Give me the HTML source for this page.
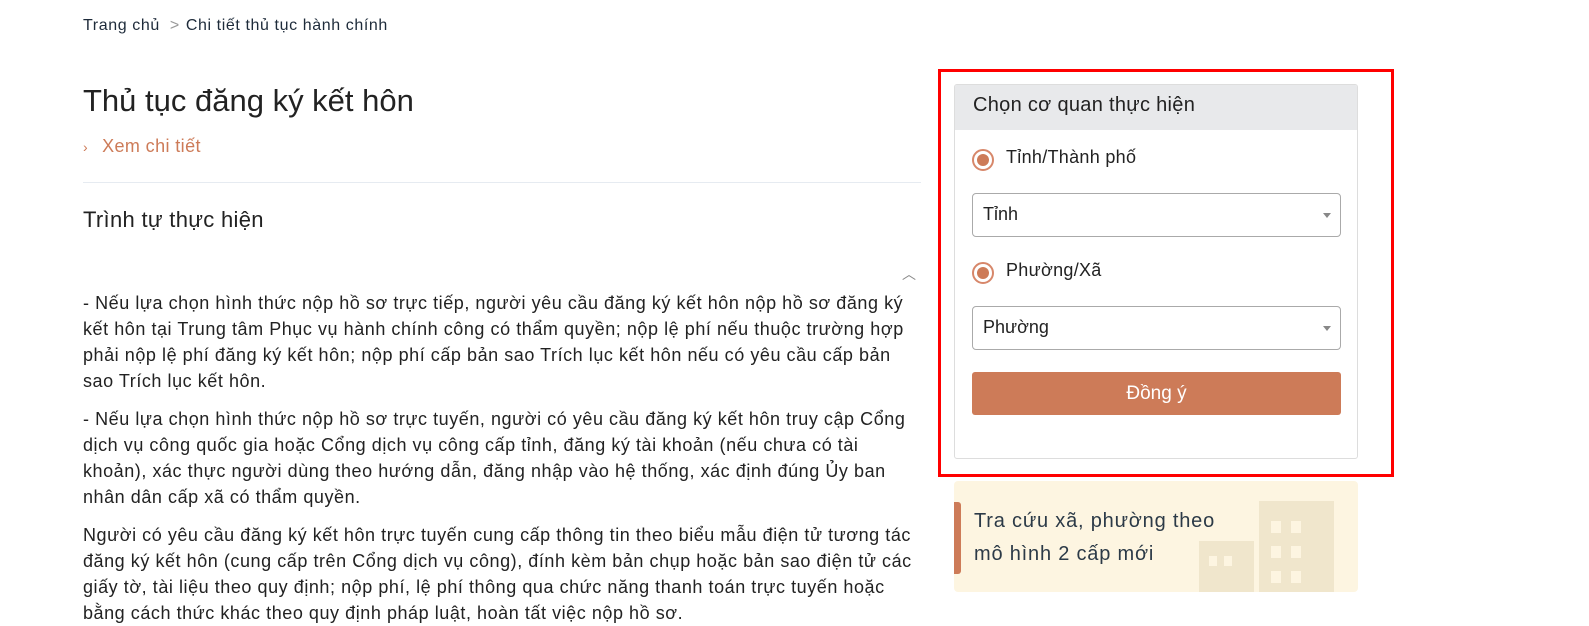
<!DOCTYPE html>
<html><head><meta charset="utf-8"><style>
*{margin:0;padding:0;box-sizing:border-box}
body{width:1589px;height:626px;overflow:hidden;background:#fff;font-family:"Liberation Sans",sans-serif;color:#222;position:relative}
.a{position:absolute;white-space:nowrap}
.bc{left:83px;top:17px;font-size:16px;color:#1e2b3a;letter-spacing:0.6px}
.bc span{color:#999;margin:0 6px 0 10px}
h1{position:absolute;left:83px;top:83px;font-size:31px;font-weight:normal;color:#222;white-space:nowrap}
.x{left:83px;top:136px;font-size:18px;color:#cd7b58;letter-spacing:0.4px}
.hr{position:absolute;left:83px;top:182px;width:838px;height:1px;background:#e6ebf1}
.h2{left:83px;top:207px;font-size:22px;color:#222;letter-spacing:0.3px}
.car{left:902px;top:264px;font-size:14px;color:#888}
.p{left:83px;font-size:18px;color:#222;line-height:26px;letter-spacing:0.55px}
.red{position:absolute;left:938px;top:69px;width:456px;height:408px;border:3px solid #f00}
.card{position:absolute;left:954px;top:84px;width:404px;height:375px;border:1px solid #ddd;border-radius:3px;overflow:hidden}
.hd{height:45px;background:#e8e9eb;font-size:20px;padding:9px 0 0 18px;color:#222;letter-spacing:0.3px}
.rad{position:absolute;width:22px;height:22px;border:2px solid #d7876a;border-radius:50%}
.rad:after{content:"";position:absolute;left:3px;top:3px;width:12px;height:12px;border-radius:50%;background:#cd7b58}
.lb{font-size:18px;color:#222;letter-spacing:0.3px}
.sel{position:absolute;left:17px;width:369px;height:44px;border:1px solid #aaa;border-radius:4px;font-size:18px;padding:10px 0 0 10px;color:#222}
.sel:after{content:"";position:absolute;right:9px;top:19px;border:4px solid transparent;border-top:5px solid #888}
.btn{position:absolute;left:17px;top:287px;width:369px;height:43px;background:#cd7b58;border-radius:3px;color:#fff;font-size:19px;text-align:center;line-height:43px}
.ban{position:absolute;left:954px;top:481px;width:404px;height:111px;background:#fdf5e1;border-radius:4px;overflow:hidden}
.bar{position:absolute;left:0;top:21px;width:7px;height:72px;background:#cd7b58;border-radius:0 3px 3px 0}
.bt{position:absolute;left:20px;top:24px;font-size:20px;line-height:33px;color:#2c3a47;letter-spacing:0.8px}
</style></head><body>
<div class="a bc">Trang chủ<span>&gt;</span>Chi tiết thủ tục hành chính</div>
<h1>Thủ tục đăng ký kết hôn</h1>
<div class="a x"><span style="font-size:14px;margin-right:14px">›</span>Xem chi tiết</div>
<div class="hr"></div>
<div class="a h2">Trình tự thực hiện</div>
<div class="a car">︿</div>
<div class="a p" style="top:290px">- Nếu lựa chọn hình thức nộp hồ sơ trực tiếp, người yêu cầu đăng ký kết hôn nộp hồ sơ đăng ký<br>kết hôn tại Trung tâm Phục vụ hành chính công có thẩm quyền; nộp lệ phí nếu thuộc trường hợp<br>phải nộp lệ phí đăng ký kết hôn; nộp phí cấp bản sao Trích lục kết hôn nếu có yêu cầu cấp bản<br>sao Trích lục kết hôn.</div>
<div class="a p" style="top:406px">- Nếu lựa chọn hình thức nộp hồ sơ trực tuyến, người có yêu cầu đăng ký kết hôn truy cập Cổng<br>dịch vụ công quốc gia hoặc Cổng dịch vụ công cấp tỉnh, đăng ký tài khoản (nếu chưa có tài<br>khoản), xác thực người dùng theo hướng dẫn, đăng nhập vào hệ thống, xác định đúng Ủy ban<br>nhân dân cấp xã có thẩm quyền.</div>
<div class="a p" style="top:522px">Người có yêu cầu đăng ký kết hôn trực tuyến cung cấp thông tin theo biểu mẫu điện tử tương tác<br>đăng ký kết hôn (cung cấp trên Cổng dịch vụ công), đính kèm bản chụp hoặc bản sao điện tử các<br>giấy tờ, tài liệu theo quy định; nộp phí, lệ phí thông qua chức năng thanh toán trực tuyến hoặc<br>bằng cách thức khác theo quy định pháp luật, hoàn tất việc nộp hồ sơ.</div>
<div class="red"></div>
<div class="card">
<div class="hd">Chọn cơ quan thực hiện</div>
<div class="rad" style="left:17px;top:64px"></div><div class="a lb" style="left:51px;top:62px">Tỉnh/Thành phố</div>
<div class="sel" style="top:108px">Tỉnh</div>
<div class="rad" style="left:17px;top:177px"></div><div class="a lb" style="left:51px;top:175px">Phường/Xã</div>
<div class="sel" style="top:221px">Phường</div>
<div class="btn">Đồng ý</div>
</div>
<div class="ban">
<svg style="position:absolute;left:245px;top:20px" width="150" height="95"><g fill="#f0e6cc"><rect x="0" y="40" width="55" height="60"/><rect x="60" y="0" width="75" height="100"/></g><g fill="#fdf5e1"><rect x="10" y="55" width="8" height="10"/><rect x="25" y="55" width="8" height="10"/><rect x="72" y="20" width="10" height="12"/><rect x="92" y="20" width="10" height="12"/><rect x="72" y="45" width="10" height="12"/><rect x="92" y="45" width="10" height="12"/><rect x="72" y="70" width="10" height="12"/><rect x="92" y="70" width="10" height="12"/></g></svg>
<div class="bar"></div>
<div class="bt">Tra cứu xã, phường theo<br>mô hình 2 cấp mới</div>
</div>
</body></html>
